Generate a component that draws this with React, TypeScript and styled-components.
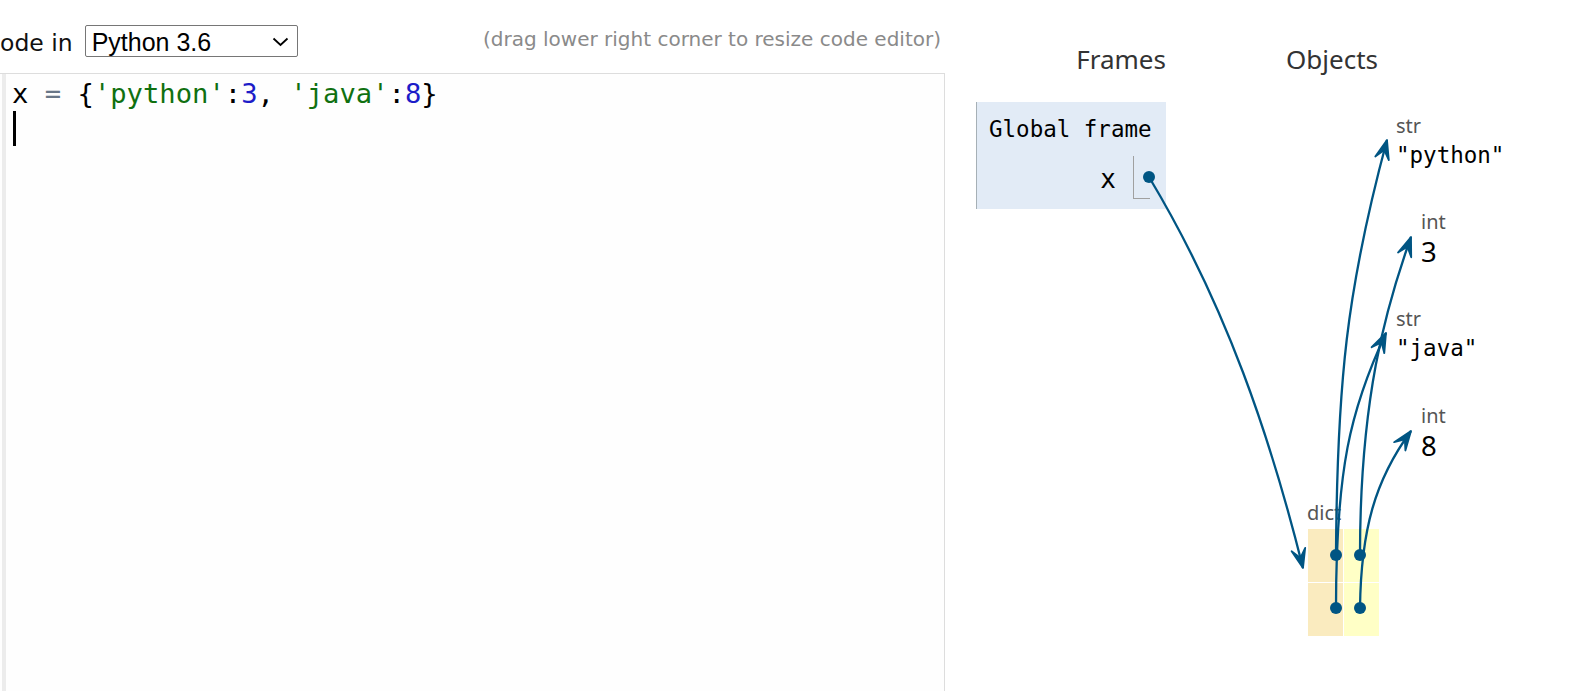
import React from "react";
import styled, { createGlobalStyle } from "styled-components";

const GlobalStyle = createGlobalStyle`
  html, body {
    margin: 0;
    padding: 0;
    background: #ffffff;
  }
  body {
    font-family: "DejaVu Sans", Verdana, sans-serif;
  }
`;

const Page = styled.div`
  position: relative;
  width: 1582px;
  height: 691px;
  overflow: hidden;
  display: flex;
  background: #ffffff;
`;

/* ---------- left: code editor pane ---------- */

const EditorPane = styled.div`
  width: 945px;
  flex: none;
  display: flex;
  flex-direction: column;
`;

const Toolbar = styled.div`
  height: 73px;
  box-sizing: border-box;
  padding: 25px 4px 0 0;
  display: flex;
  align-items: baseline;
`;

const LangLabel = styled.span`
  font-family: "DejaVu Sans", Verdana, sans-serif;
  font-size: 23.5px;
  color: #111;
  white-space: nowrap;
`;

const SelectWrap = styled.div`
  position: relative;
  margin-left: 12px;
  display: inline-flex;
`;

const LangSelect = styled.select`
  appearance: none;
  -webkit-appearance: none;
  width: 213px;
  height: 32px;
  box-sizing: border-box;
  padding: 2px 0 0 6px;
  margin: 0;
  border: 1px solid #767676;
  border-radius: 2px;
  background: #ffffff;
  color: #000;
  font-family: "Liberation Sans", Arial, sans-serif;
  font-size: 25px;
  outline: none;
`;

const Chevron = styled.svg`
  position: absolute;
  right: 9px;
  top: 12px;
  pointer-events: none;
`;

const Hint = styled.span`
  margin-left: auto;
  align-self: flex-start;
  margin-top: 2px;
  font-family: "DejaVu Sans", Verdana, sans-serif;
  font-size: 20px;
  color: #8a8a8a;
  white-space: nowrap;
`;

const Editor = styled.div`
  flex: 1;
  display: flex;
  border-top: 1px solid #dddddd;
  border-right: 1px solid #dddddd;
  background: #fefefe;
`;

const Gutter = styled.div`
  width: 4px;
  margin-left: 2px;
  background: #ececec;
  flex: none;
`;

const Code = styled.div`
  padding: 3px 0 0 6px;
  font-family: "DejaVu Sans Mono", "Liberation Mono", monospace;
  font-size: 27.2px;
  line-height: 34px;
  color: #000;
`;

const CodeLine = styled.div`
  height: 34px;
  white-space: pre;
`;

type TokKind = "plain" | "op" | "str" | "num";
const tokColors: Record<TokKind, string> = {
  plain: "#000000",
  op: "#687687",
  str: "#107010",
  num: "#1c1cc8",
};

const Tok = styled.span<{ $k: TokKind }>`
  color: ${(p) => tokColors[p.$k]};
`;

const Cursor = styled.span`
  display: inline-block;
  width: 3px;
  height: 35px;
  margin-left: 1px;
  background: #000;
  vertical-align: top;
`;

/* ---------- right: visualization pane ---------- */

const VizPane = styled.div`
  flex: 1;
  padding-left: 31px;
  display: flex;
  flex-direction: column;
`;

const VizHeader = styled.div`
  display: flex;
  padding-top: 42px;
  font-family: "Noto Sans", "Open Sans", sans-serif;
  font-size: 26px;
  line-height: 35px;
  color: #333;
`;

const FramesTitle = styled.div`
  width: 190px;
  text-align: right;
`;

const ObjectsTitle = styled.div`
  margin-left: 120px;
`;

const VizBody = styled.div`
  margin-top: 25px;
  display: flex;
  flex: 1;
`;

const StackColumn = styled.div`
  width: 190px;
  flex: none;
`;

const Frame = styled.div`
  box-sizing: border-box;
  width: 190px;
  padding: 14px 16px 10px 12px;
  background: #e2ebf6;
  border-left: 1px solid #a6b0b6;
`;

const FrameTitle = styled.div`
  font-family: "DejaVu Sans Mono", monospace;
  font-size: 22.5px;
  line-height: 26px;
  color: #000;
  white-space: nowrap;
`;

const VarRow = styled.div`
  margin-top: 14px;
  display: flex;
  justify-content: flex-end;
  align-items: center;
`;

const VarName = styled.div`
  padding-top: 3px;
  margin-right: 17px;
  font-family: "DejaVu Sans Mono", monospace;
  font-size: 26px;
  color: #000;
`;

const ValueCell = styled.div`
  box-sizing: border-box;
  width: 17px;
  height: 43px;
  border-left: 1px solid #a0a0a0;
  border-bottom: 1px solid #a0a0a0;
`;

const HeapCanvas = styled.div`
  position: relative;
  flex: 1;
`;

const HeapNode = styled.div<{ $x: number; $y: number }>`
  position: absolute;
  left: ${(p) => p.$x}px;
  top: ${(p) => p.$y}px;
  display: flex;
  flex-direction: column;
  align-items: flex-start;
`;

const TypeLabel = styled.div<{ $shift?: number }>`
  font-family: "Noto Sans", "Open Sans", sans-serif;
  font-size: 20px;
  line-height: 27px;
  color: #555555;
  margin-left: ${(p) => p.$shift ?? 0}px;
`;

const StrValue = styled.div`
  margin-top: 3px;
  font-family: "DejaVu Sans Mono", monospace;
  font-size: 22.5px;
  line-height: 26px;
  color: #000;
  white-space: pre;
`;

const NumValue = styled.div`
  margin-top: 0px;
  font-family: "Noto Sans", "Open Sans", sans-serif;
  font-size: 27.5px;
  line-height: 33px;
  color: #000;
`;

const DictTable = styled.div`
  margin-top: 3px;
  display: grid;
  grid-template-columns: 35px 35px;
  grid-auto-rows: 53px;
  gap: 1px;
`;

const DictCell = styled.div<{ $key?: boolean }>`
  background: ${(p) => (p.$key ? "#faebbf" : "#ffffc6")};
`;

const Overlay = styled.svg`
  position: absolute;
  left: 0;
  top: 0;
  pointer-events: none;
`;

/* ---------- arrows ---------- */

type Pt = [number, number];
type Curve = { p0: Pt; p1: Pt; p2: Pt; p3: Pt };

const ARROW = "#005583";

const curves: Curve[] = [
  { p0: [1149, 177], p1: [1227, 307], p2: [1270.5, 438], p3: [1303, 568] },
  { p0: [1336, 555], p1: [1337, 385], p2: [1346.5, 290], p3: [1387, 140] },
  { p0: [1336, 608], p1: [1336, 470], p2: [1350, 410], p3: [1386, 333] },
  { p0: [1360, 555], p1: [1360, 400], p2: [1385, 310], p3: [1411, 237] },
  { p0: [1360, 608], p1: [1361, 530], p2: [1375, 480], p3: [1411, 431] },
];

const dots: Pt[] = [
  [1149, 177],
  [1336, 555],
  [1360, 555],
  [1336, 608],
  [1360, 608],
];

function headPath(from: Pt, tip: Pt, L = 19, W = 14, fold = 0.55): string {
  const dx = tip[0] - from[0];
  const dy = tip[1] - from[1];
  const len = Math.hypot(dx, dy) || 1;
  const ux = dx / len;
  const uy = dy / len;
  const nx = -uy;
  const ny = ux;
  const bx = tip[0] - ux * L;
  const by = tip[1] - uy * L;
  const w1: Pt = [bx + (nx * W) / 2, by + (ny * W) / 2];
  const w2: Pt = [bx - (nx * W) / 2, by - (ny * W) / 2];
  const fb: Pt = [tip[0] - ux * L * fold, tip[1] - uy * L * fold];
  return `M${tip[0]},${tip[1]} L${w1[0]},${w1[1]} L${fb[0]},${fb[1]} L${w2[0]},${w2[1]} Z`;
}

function Arrows() {
  return (
    <Overlay width={1582} height={691} viewBox="0 0 1582 691">
      {curves.map((c, i) => (
        <g key={i}>
          <path
            d={`M${c.p0[0]},${c.p0[1]} C${c.p1[0]},${c.p1[1]} ${c.p2[0]},${c.p2[1]} ${c.p3[0]},${c.p3[1]}`}
            fill="none"
            stroke={ARROW}
            strokeWidth={2.3}
          />
          <path d={headPath(c.p2, c.p3)} fill={ARROW} stroke={ARROW} strokeWidth={1.8} strokeLinejoin="round" />
        </g>
      ))}
      {dots.map((d, i) => (
        <circle key={i} cx={d[0]} cy={d[1]} r={6} fill={ARROW} />
      ))}
    </Overlay>
  );
}

/* ---------- heap data ---------- */

type HeapItem =
  | { kind: "str"; x: number; y: number; value: string }
  | { kind: "int"; x: number; y: number; value: string };

const heapItems: HeapItem[] = [
  { kind: "str", x: 230, y: 10, value: '"python"' },
  { kind: "int", x: 255, y: 106, value: "3" },
  { kind: "str", x: 230, y: 203, value: '"java"' },
  { kind: "int", x: 255, y: 300, value: "8" },
];

export default function App() {
  return (
    <>
      <GlobalStyle />
      <Page>
        <EditorPane>
          <Toolbar>
            <LangLabel>ode in</LangLabel>
            <SelectWrap>
              <LangSelect defaultValue="py3">
                <option value="py3">Python 3.6</option>
                <option value="py2">Python 2.7</option>
              </LangSelect>
              <Chevron width={17} height={10} viewBox="0 0 17 10">
                <polyline points="1.5,1.5 8.5,8 15.5,1.5" fill="none" stroke="#000" strokeWidth={1.8} />
              </Chevron>
            </SelectWrap>
            <Hint>(drag lower right corner to resize code editor)</Hint>
          </Toolbar>
          <Editor>
            <Gutter />
            <Code>
              <CodeLine>
                <Tok $k="plain">x </Tok>
                <Tok $k="op">=</Tok>
                <Tok $k="plain"> {"{"}</Tok>
                <Tok $k="str">'python'</Tok>
                <Tok $k="plain">:</Tok>
                <Tok $k="num">3</Tok>
                <Tok $k="plain">, </Tok>
                <Tok $k="str">'java'</Tok>
                <Tok $k="plain">:</Tok>
                <Tok $k="num">8</Tok>
                <Tok $k="plain">{"}"}</Tok>
              </CodeLine>
              <CodeLine>
                <Cursor />
              </CodeLine>
            </Code>
          </Editor>
        </EditorPane>

        <VizPane>
          <VizHeader>
            <FramesTitle>Frames</FramesTitle>
            <ObjectsTitle>Objects</ObjectsTitle>
          </VizHeader>
          <VizBody>
            <StackColumn>
              <Frame>
                <FrameTitle>Global frame</FrameTitle>
                <VarRow>
                  <VarName>x</VarName>
                  <ValueCell />
                </VarRow>
              </Frame>
            </StackColumn>
            <HeapCanvas>
              {heapItems.map((h, i) => (
                <HeapNode key={i} $x={h.x} $y={h.y}>
                  <TypeLabel>{h.kind}</TypeLabel>
                  {h.kind === "str" ? <StrValue>{h.value}</StrValue> : <NumValue>{h.value}</NumValue>}
                </HeapNode>
              ))}
              <HeapNode $x={142} $y={397}>
                <TypeLabel $shift={-1}>dict</TypeLabel>
                <DictTable>
                  <DictCell $key />
                  <DictCell />
                  <DictCell $key />
                  <DictCell />
                </DictTable>
              </HeapNode>
            </HeapCanvas>
          </VizBody>
        </VizPane>
        <Arrows />
      </Page>
    </>
  );
}
